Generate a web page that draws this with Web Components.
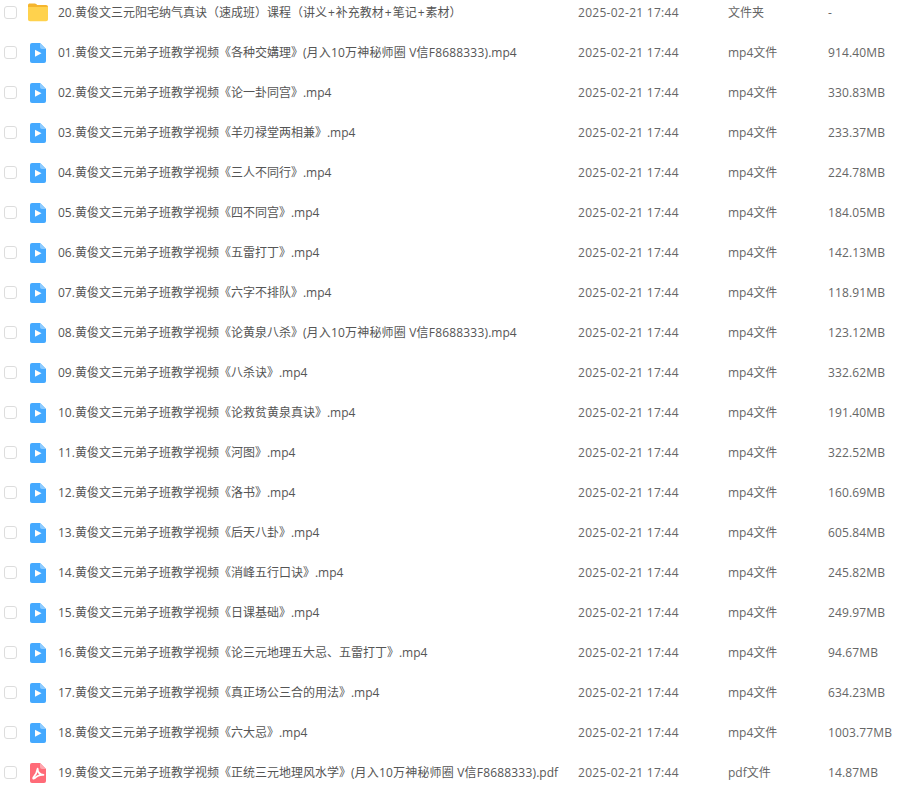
<!DOCTYPE html>
<html lang="zh">
<head>
<meta charset="utf-8">
<title>文件列表</title>
<style>
  html, body { margin: 0; background: #fff; }
  body { overflow: hidden; height: 789px; }
</style>
</head>
<body>
<file-list></file-list>

<script>
const ICONS = {
  folder: `<svg width="20" height="20" viewBox="0 0 20 20">
    <path d="M0 2.200C0 1 .8 .4 1.800 .4h5c.6 0 1 .2 1.400.6l1 1h8.800c1.200 0 2 .8 2 2v.6H0z" fill="#f5b52e"/>
    <path d="M0 4h20v12.200c0 1.200-.8 2-2 2H2c-1.200 0-2-.8-2-2z" fill="#ffd24d"/>
  </svg>`,
  video: `<svg width="20" height="20" viewBox="-2 0 20 20">
    <path d="M2 0h8l6 6v12a2 2 0 0 1-2 2H2a2 2 0 0 1-2-2V2a2 2 0 0 1 2-2z" fill="#44a9ff"/>
    <path d="M10 0v4a2 2 0 0 0 2 2h4z" fill="#8ccbff"/>
    <path d="M5 6.800v7l6.500-3.500z" fill="#fff"/>
  </svg>`,
  pdf: `<svg width="20" height="20" viewBox="-2 0 20 20">
    <path d="M2 0h8l6 6v12a2 2 0 0 1-2 2H2a2 2 0 0 1-2-2V2a2 2 0 0 1 2-2z" fill="#ff6b78"/>
    <path d="M10 0v4a2 2 0 0 0 2 2h4z" fill="#ffa6ae"/>
    <path d="M7.600 5.600c.1 3.200 1.900 5.900 5.900 6.300-3.400-.2-6.500.9-8.700 3.300-1.200 1-2.100.4-1.500-.6 2-2.400 3.800-5.400 4.300-9z" fill="none" stroke="#fff" stroke-width="1.700" stroke-linejoin="round"/>
  </svg>`
};

class FileRow extends HTMLElement {
  constructor() {
    super();
    this.attachShadow({mode: 'open'});
  }

  connectedCallback() {
    const kind = this.getAttribute('kind') || 'video';
    this.shadowRoot.innerHTML = `
      <style>
        :host {
          display: grid;
          grid-template-columns: 24px 30px 520px 150px 100px 1fr;
          align-items: center;
          height: 40px;
          padding-left: 4px;
          font: 12px/20px "Open Sans", "Noto Sans CJK SC", sans-serif;
          color: #666;
        }
        .check {
          width: 11px;
          height: 11px;
          margin-top: -1px;
          border: 1.5px solid #ddd;
          border-radius: 3px;
          background: #fff;
        }
        .icon { display: flex; margin-top: -1px; }
        .name { color: #555; white-space: nowrap; }
        .cell { white-space: nowrap; }
        .date { letter-spacing: .28px; }
        .size { letter-spacing: .15px; }
      </style>
      <span class="check"></span>
      <span class="icon">${ICONS[kind]}</span>
      <span class="name"><slot></slot></span>
      <span class="cell date">2025-02-21 17:44</span>
      <span class="cell">${this.getAttribute('type')}</span>
      <span class="cell size">${this.getAttribute('size')}</span>
    `;
  }
}

customElements.define('file-row', FileRow);

const AD = '<span class="ad">(月入10万神秘师圈 V信F8688333)</span>';

const FILES = [
  ['01', '各种交媾理', AD, '914.40MB'],
  ['02', '论一卦同宫', '', '330.83MB'],
  ['03', '羊刃禄堂两相兼', '', '233.37MB'],
  ['04', '三人不同行', '', '224.78MB'],
  ['05', '四不同宫', '', '184.05MB'],
  ['06', '五雷打丁', '', '142.13MB'],
  ['07', '六字不排队', '', '118.91MB'],
  ['08', '论黄泉八杀', AD, '123.12MB'],
  ['09', '八杀诀', '', '332.62MB'],
  ['10', '论救贫黄泉真诀', '', '191.40MB'],
  ['11', '河图', '', '322.52MB'],
  ['12', '洛书', '', '160.69MB'],
  ['13', '后天八卦', '', '605.84MB'],
  ['14', '消峰五行口诀', '', '245.82MB'],
  ['15', '日课基础', '', '249.97MB'],
  ['16', '论三元地理五大忌、五雷打丁', '', '94.67MB'],
  ['17', '真正场公三合的用法', '', '634.23MB'],
  ['18', '六大忌', '', '1003.77MB']
];

class FileList extends HTMLElement {
  constructor() {
    super();
    this.attachShadow({mode: 'open'});
  }

  connectedCallback() {
    const rows = FILES.map(f => `
      <file-row kind="video" type="mp4文件" size="${f[3]}">${f[0]}.黄俊文三元弟子班教学视频《${f[1]}》${f[2]}.mp4</file-row>
    `).join('');
    this.shadowRoot.innerHTML = `
      <style>
        :host { display: block; margin-top: -7px; }
        .plus { padding: 0 1px; }
        .ad { letter-spacing: .18px; }
      </style>
      <file-row kind="folder" type="文件夹" size="-">20.黄俊文三元阳宅纳气真诀（速成班）课程（讲义<span class="plus">+</span>补充教材<span class="plus">+</span>笔记<span class="plus">+</span>素材）</file-row>
      ${rows}
      <file-row kind="pdf" type="pdf文件" size="14.87MB">19.黄俊文三元弟子班教学视频《正统三元地理风水学》${AD}.pdf</file-row>
    `;
  }
}

customElements.define('file-list', FileList);
</script>
</body>
</html>
